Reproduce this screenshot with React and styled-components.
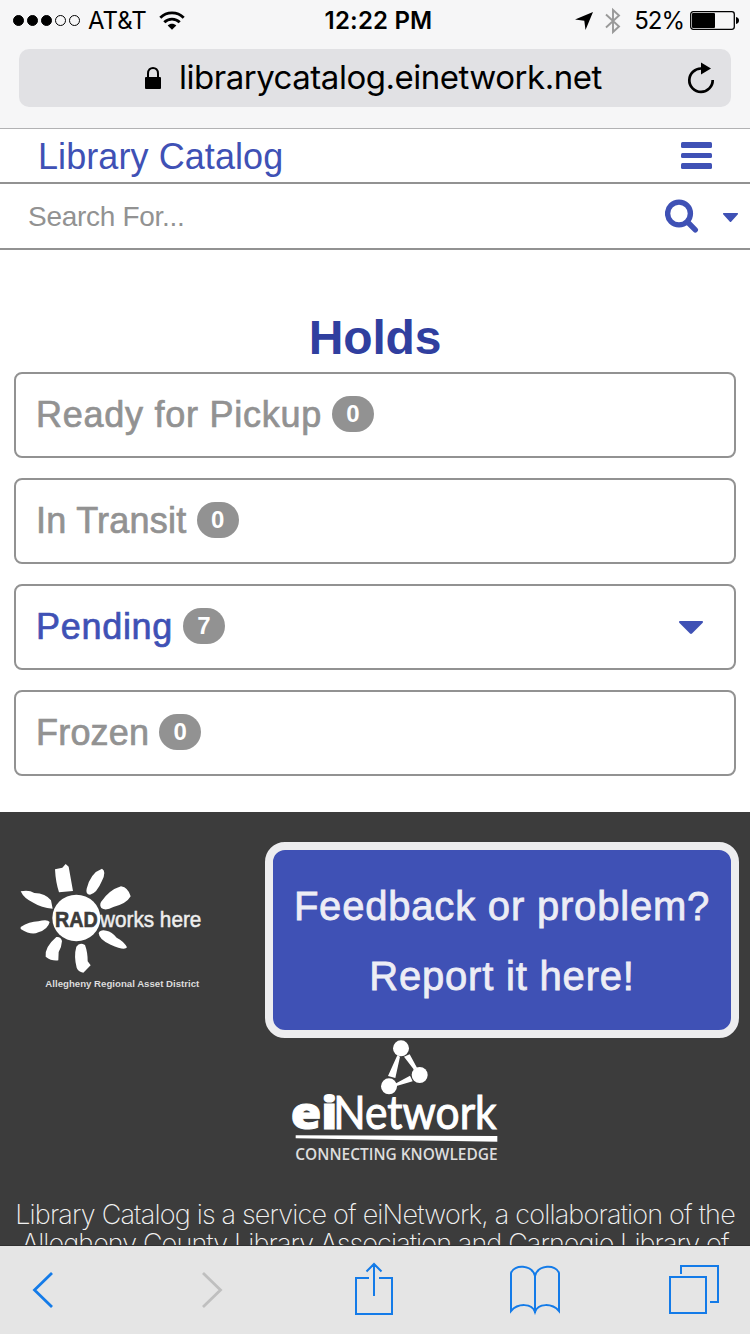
import React from "react";
import styled, { createGlobalStyle } from "styled-components";

const INDIGO = "#3f51b5";
const GREY = "#929292";
const IOS_BLUE = "#147be8";

const GlobalStyle = createGlobalStyle`
  * { box-sizing: border-box; }
  body { margin: 0; background: #fff; }
`;

const Screen = styled.div`
  width: 750px;
  height: 1334px;
  overflow: hidden;
  display: flex;
  flex-direction: column;
  position: relative;
  background: #fff;
  font-family: "Liberation Sans", Arial, sans-serif;
`;

const BrowserTop = styled.header`
  height: 129px;
  flex: none;
  background: #f6f6f7;
  border-bottom: 1px solid #b2b2b4;
`;

const StatusBar = styled.div`
  height: 41px;
  padding: 0 11px 0 13px;
  display: grid;
  grid-template-columns: 1fr auto 1fr;
  align-items: center;
  font: 400 24px/41px Inter, sans-serif;
  color: #000;
`;

const StatusGroup = styled.div`
  display: flex;
  align-items: center;
  justify-content: ${(p) => (p.$end ? "flex-end" : "flex-start")};
`;

const SignalDots = styled.div`
  display: flex;
  gap: 3px;
  margin-right: 8px;
`;

const Dot = styled.i`
  width: 11px;
  height: 11px;
  border-radius: 50%;
  border: 1px solid #000;
  background: ${(p) => (p.$on ? "#000" : "transparent")};
`;

const Carrier = styled.span`
  letter-spacing: 0;
  margin-right: 12px;
`;

const Clock = styled.span`
  font-weight: 600;
  letter-spacing: 0.2px;
  margin-left: 5px;
`;

const Percent = styled.span`
  letter-spacing: -1px;
  margin: 0 6px 0 13px;
`;

const AddressBar = styled.div`
  height: 58px;
  margin: 8px 19px 0;
  padding: 0 16px 0 125px;
  border-radius: 10px;
  background: #e1e1e4;
  display: flex;
  align-items: center;
`;

const Url = styled.span`
  flex: 1;
  margin-left: 17px;
  padding-bottom: 1px;
  font: 400 33px/57px Inter, sans-serif;
  letter-spacing: -0.48px;
  color: #000;
`;

const Page = styled.main`
  flex: 1;
  min-height: 0;
  overflow: hidden;
`;

const TitleRow = styled.div`
  height: 55px;
  padding: 0 38px 0 38px;
  border-bottom: 2px solid ${GREY};
  display: flex;
  align-items: center;
  justify-content: space-between;
`;

const SiteTitle = styled.span`
  padding-top: 2px;
  font-size: 36px;
  line-height: 51px;
  letter-spacing: 0.08px;
  color: ${INDIGO};
`;

const MenuButton = styled.span`
  display: flex;
  flex-direction: column;
  gap: 5px;
`;

const MenuLine = styled.i`
  width: 31px;
  height: 5.4px;
  border-radius: 1.5px;
  background: ${INDIGO};
`;

const SearchRow = styled.div`
  height: 66px;
  padding: 0 12px 0 28px;
  border-bottom: 2px solid ${GREY};
  display: flex;
  align-items: center;
`;

const Placeholder = styled.span`
  flex: 1;
  padding-top: 2px;
  font-size: 28px;
  line-height: 62px;
  letter-spacing: -0.3px;
  color: ${GREY};
`;

const SearchIcon = styled.svg`
  width: 34px;
  height: 34px;
  margin: 0 24px 1px 0;
  fill: none;
  stroke: ${INDIGO};
  stroke-width: 5.4;
  stroke-linecap: round;
`;

const Caret = styled.svg`
  display: block;
  width: ${(p) => p.$w}px;
  height: ${(p) => p.$h}px;
  margin-top: 2px;
  fill: ${INDIGO};
`;

const Heading = styled.h1`
  margin: 60px 0 6px;
  font-size: 48px;
  line-height: 56px;
  letter-spacing: -0.2px;
  font-weight: 700;
  text-align: center;
  color: #303f9f;
`;

const HoldList = styled.div`
  display: flex;
  flex-direction: column;
  gap: 20px;
  padding: 0 14px;
`;

const HoldCard = styled.div`
  height: 86px;
  padding: 0 31px 2px 20px;
  border: 2px solid ${GREY};
  border-radius: 8px;
  display: flex;
  align-items: center;
`;

const HoldLabel = styled.span`
  padding-top: 1px;
  font-size: 36px;
  letter-spacing: ${(p) => p.$spacing}px;
  color: ${(p) => (p.$active ? INDIGO : GREY)};
  -webkit-text-stroke: 0.7px currentColor;
`;

const Badge = styled.span`
  width: 42px;
  height: 36px;
  margin: 0 auto 0 10px;
  border-radius: 20px;
  background: ${GREY};
  color: #fff;
  font-size: 24px;
  font-weight: 700;
  line-height: 36px;
  text-align: center;
`;

const Footer = styled.footer`
  margin-top: 36px;
  padding-top: 28px;
  height: 500px;
  background: #3c3c3c;
  color: #fff;
`;

const RadLogo = styled.svg`
  display: block;
  width: 260px;
  height: 170px;
`;

const NetworkLogo = styled.svg`
  display: block;
  width: 260px;
  height: 160px;
  margin: 10px 0 0 260px;
`;

const FooterText = styled.p`
  margin: 20px 0 0;
  font: 200 27px/29px Inter, sans-serif;
  text-align: center;
  white-space: nowrap;
  color: #f2f2f2;
`;

const FooterLine = styled.span`
  display: block;
  letter-spacing: ${(p) => p.$spacing}px;
`;

const Feedback = styled.div`
  position: absolute;
  left: 265px;
  top: 842px;
  width: 474px;
  height: 196px;
  padding: 21px 0 0;
  border: 8px solid #ededef;
  border-radius: 20px;
  background: ${INDIGO};
  color: #ededf5;
  font-size: 40px;
  line-height: 70px;
  letter-spacing: 0.8px;
  text-align: center;
  -webkit-text-stroke: 0.8px currentColor;
`;

const Toolbar = styled.nav`
  height: 89px;
  flex: none;
  padding-left: 30px;
  border-top: 1px solid #303030;
  background: #e5e5e5;
  display: flex;
  align-items: center;
`;

const ToolIcon = styled.svg`
  display: block;
  flex: none;
  margin-left: ${(p) => p.$gap || 0}px;
  margin-bottom: ${(p) => p.$lift || 0}px;
  fill: none;
  stroke: ${(p) => (p.$off ? "#bfbfbf" : IOS_BLUE)};
  stroke-width: ${(p) => p.$sw || 2};
`;

const holds = [
  { label: "Ready for Pickup", count: 0, spacing: 0.74 },
  { label: "In Transit", count: 0, spacing: 0.25 },
  { label: "Pending", count: 7, active: true, spacing: 0.7 },
  { label: "Frozen", count: 0, spacing: 0.2 },
];

function WifiIcon() {
  return (
    <svg width="26" height="20" viewBox="0 0 26 20" fill="none" stroke="#000" strokeWidth="2.8">
      <path d="M1.3 6.8C7.8.3 18.2.3 24.7 6.8M5.3 11.2c4.2-4.2 11.2-4.2 15.4 0" />
      <path d="M8.7 14.4c2.4-2.2 6.2-2.2 8.6 0L13 18.7z" fill="#000" stroke="none" />
    </svg>
  );
}

function BatteryIcon() {
  return (
    <svg width="49" height="20" viewBox="0 0 49 20">
      <rect x=".7" y=".7" width="43.6" height="17.6" rx="2.5" fill="none" stroke="#000" strokeWidth="1.3" />
      <rect x="2" y="2" width="23" height="15" rx="1" />
      <path d="M46 6q3 .6 3 3.5T46 13z" />
    </svg>
  );
}

function RadSun() {
  return (
    <RadLogo viewBox="0 0 780 510">
      <g fill="#fff">
        <ellipse cx="229" cy="234" rx="72" ry="70" />
        <path d="M165 88l22-5 10-11 9 8 13 73-42 4q-10-30-12-69z" />
        <path d="M306 86q14 8 0 36-16 38-36 42-14-2-10-18 12-48 46-60z" />
        <path d="M303 186q24-36 60-47 22 4 29 30-12 22-52 32-23 13-36 3-6-8-1-18z" />
        <path d="M62 154q24-6 41 5 34 1 50 22l5 25q-34-3-58-18-28-12-38-34z" />
        <path d="M62 261q26-16 53-17 27-8 34 2-5 22-34 31-20 11-53-10z" />
        <path d="M169 291q13-2 17 12-1 18-10 33l-1 25q-20 3-38-11-4-28 32-59z" />
        <path d="M229 320q10-15 26-5 8 21 8 49l9 12-22 22q-16-3-20-15-9-35-1-63z" />
        <path d="M296 279q5-11 23-7 17 3 31 21 22 11 31 29-7 11-49-8-35-15-36-35z" />
      </g>
      <g fontFamily="Liberation Sans, sans-serif">
        <text x="165" y="261" fontSize="68" fontWeight="700" fill="#3c3c3c" stroke="#3c3c3c" strokeWidth="2" textLength="128" lengthAdjust="spacingAndGlyphs">RAD</text>
        <text x="300" y="261" fontSize="66" fill="#eee" stroke="#eee" strokeWidth="1.5" textLength="304" lengthAdjust="spacingAndGlyphs">works here</text>
        <text x="136" y="442" fontSize="27" fontWeight="700" fill="#ddd" textLength="462" lengthAdjust="spacingAndGlyphs">Allegheny Regional Asset District</text>
      </g>
    </RadLogo>
  );
}

function EiNetwork() {
  return (
    <NetworkLogo viewBox="0 0 780 480">
      <g fill="#fff">
        <circle cx="423" cy="85" r="24" />
        <circle cx="479" cy="165" r="24" />
        <circle cx="387" cy="199" r="24" />
        <path d="M412 106l8 4-14 64-22-6zM432 110l17-7 22 40-9 6zM400 194l50-27 8 17-56 16z" />
        <path d="M107 346l605 2v17l-605-10z" />
      </g>
      <text x="92" y="327" fontFamily="Open Sans, sans-serif" fontSize="132" fontWeight="800" fill="#fff" stroke="#fff" strokeWidth="3" textLength="140" lengthAdjust="spacingAndGlyphs">ei</text>
      <text x="220" y="327" fontFamily="Lato, sans-serif" fontSize="138" fill="#fff" stroke="#fff" strokeWidth="3" textLength="490" lengthAdjust="spacingAndGlyphs">Network</text>
      <text x="106" y="420" fontFamily="Open Sans, sans-serif" fontSize="48" fontWeight="600" fill="#ddd" textLength="607" lengthAdjust="spacingAndGlyphs">CONNECTING KNOWLEDGE</text>
    </NetworkLogo>
  );
}

function DownCaret({ w, h }) {
  return (
    <Caret $w={w} $h={h} viewBox="0 0 24 13" preserveAspectRatio="none">
      <path d="M1 0h22q2 .5.500 2L13 12.500q-1 .8-2 0L.5 2Q-1 .5 1 0z" />
    </Caret>
  );
}

export default function App() {
  return (
    <Screen>
      <GlobalStyle />
      <BrowserTop>
        <StatusBar>
          <StatusGroup>
            <SignalDots>
              {[1, 1, 1, 0, 0].map((on, i) => (
                <Dot key={i} $on={!!on} />
              ))}
            </SignalDots>
            <Carrier>AT&amp;T</Carrier>
            <WifiIcon />
          </StatusGroup>
          <Clock>12:22 PM</Clock>
          <StatusGroup $end>
            <svg width="18" height="18" viewBox="0 0 18 18">
              <path d="M18 0L10.500 18 9.300 8.800 0 7.500z" />
            </svg>
            <svg width="28" height="28" viewBox="-12 0 28 28" fill="none" stroke="#999" strokeWidth="1.9">
              <path d="M1 7.500l13 12L8 25V3l6 5.500-13 12" />
            </svg>
            <Percent>52%</Percent>
            <BatteryIcon />
          </StatusGroup>
        </StatusBar>
        <AddressBar>
          <svg width="18" height="24" viewBox="0 0 18 24">
            <rect x="1" y="11" width="16" height="12" rx="1" />
            <path d="M4 12V7.500C4 0 14 0 14 7.500V12" fill="none" stroke="#000" strokeWidth="2" />
          </svg>
          <Url>librarycatalog.einetwork.net</Url>
          <svg width="28" height="32" viewBox="0 0 28 32">
            <path d="M14.500 6.500A11.700 11.700 0 1 0 25.700 18" fill="none" stroke="#000" strokeWidth="2.700" />
            <path d="M14 .5l10 6-10 6z" />
          </svg>
        </AddressBar>
      </BrowserTop>

      <Page>
        <TitleRow>
          <SiteTitle>Library Catalog</SiteTitle>
          <MenuButton>
            <MenuLine />
            <MenuLine />
            <MenuLine />
          </MenuButton>
        </TitleRow>
        <SearchRow>
          <Placeholder>Search For...</Placeholder>
          <SearchIcon viewBox="0 0 34 34">
            <circle cx="14" cy="14.500" r="11.400" />
            <path d="M23.500 24l6.800 6.800" />
          </SearchIcon>
          <DownCaret w={15} h={9} />
        </SearchRow>

        <Heading>Holds</Heading>
        <HoldList>
          {holds.map((h) => (
            <HoldCard key={h.label}>
              <HoldLabel $active={h.active} $spacing={h.spacing}>
                {h.label}
              </HoldLabel>
              <Badge>{h.count}</Badge>
              {h.active && <DownCaret w={24} h={13} />}
            </HoldCard>
          ))}
        </HoldList>

        <Footer>
          <RadSun />
          <EiNetwork />
          <FooterText>
            <FooterLine $spacing={-0.82}>Library Catalog is a service of eiNetwork, a collaboration of the</FooterLine>
            <FooterLine $spacing={-0.9}>Allegheny County Library Association and Carnegie Library of</FooterLine>
          </FooterText>
        </Footer>
      </Page>

      <Feedback>
        Feedback or problem?
        <br />
        Report it here!
      </Feedback>

      <Toolbar>
        <ToolIcon width="24" height="38" viewBox="0 0 24 38" $sw={2.8}>
          <path d="M22 2L4.500 19 22 36" />
        </ToolIcon>
        <ToolIcon width="24" height="38" viewBox="0 0 24 38" $gap={147} $sw={2.8} $off>
          <path d="M2 2l17.500 17L2 36" />
        </ToolIcon>
        <ToolIcon width="38" height="54" viewBox="0 0 38 54" $gap={130} $lift={5}>
          <path d="M14 17H1v36h36V17H24M19 35V3M11.500 10.500L19 3l7.500 7.500" />
        </ToolIcon>
        <ToolIcon width="50" height="50" viewBox="0 0 50 50" $gap={117}>
          <path d="M25 48V11C22-.5 4-1 1 8v38c7-8 21-8 24 1 3-9 17-9 24-1V8C46-1 28-.5 25 11" />
        </ToolIcon>
        <ToolIcon width="50" height="50" viewBox="0 0 50 50" $gap={109} $lift={2}>
          <path d="M1 13h36v36H1zM12 10V2h37v36h-8" />
        </ToolIcon>
      </Toolbar>
    </Screen>
  );
}
